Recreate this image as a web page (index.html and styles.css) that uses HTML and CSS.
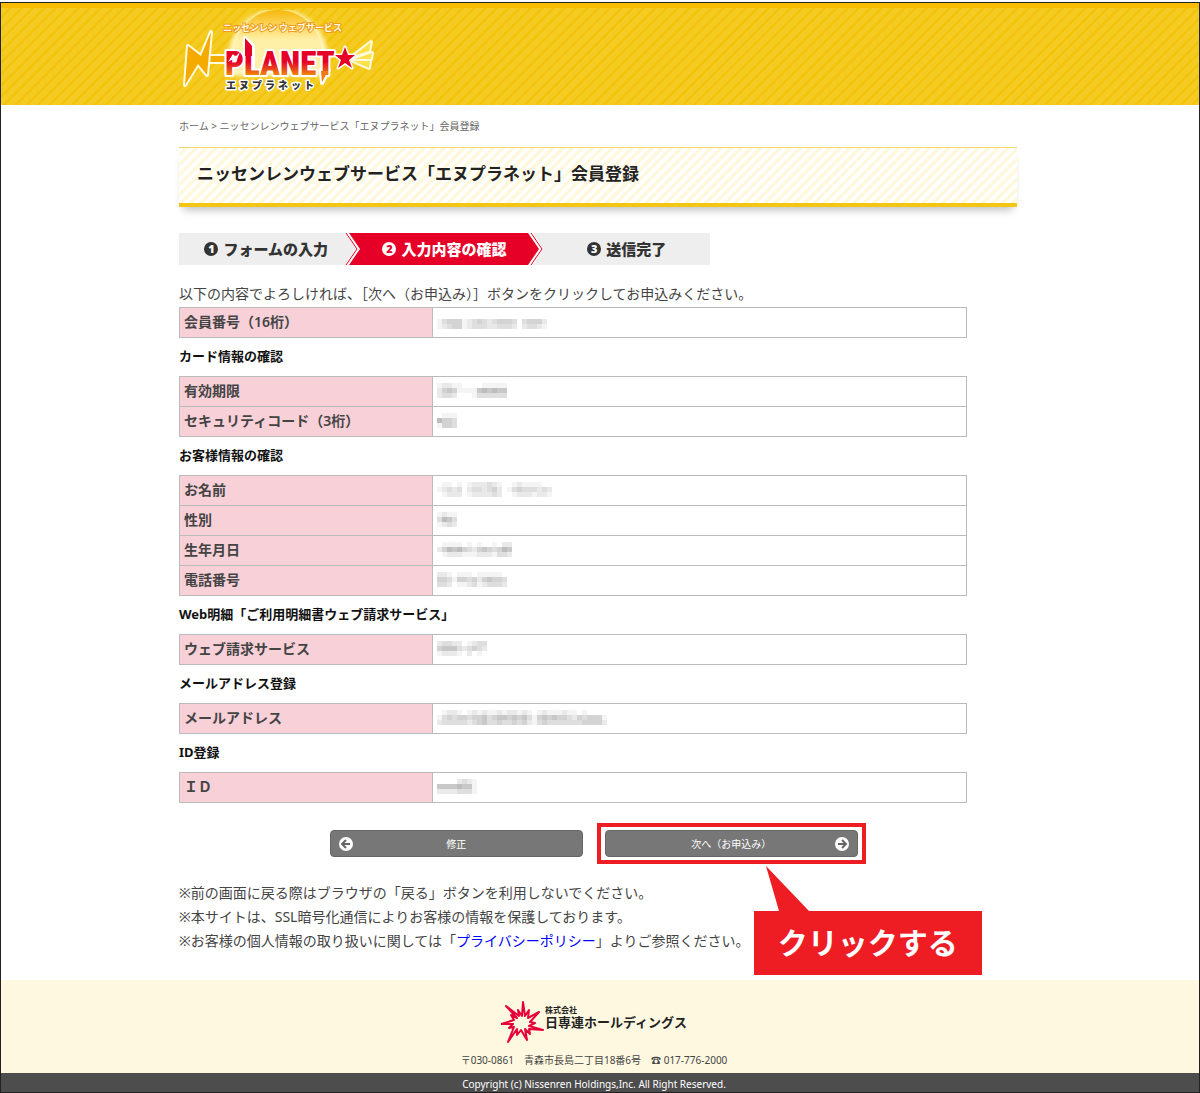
FILE: index.html
```html
<!DOCTYPE html>
<html lang="ja">
  <head>
    <meta charset="utf-8">
    <title>ニッセンレンウェブサービス「エヌプラネット」会員登録</title>
    <link rel="stylesheet" href="styles.css">
  </head>
  <body>
    <div class="page">
      <header class="header">
        <div class="container">
          <a class="logo" href="#" aria-label="エヌプラネット">
            <svg width="200" height="84" viewBox="0 0 200 84">
              <defs>
                <linearGradient id="red" x1="0" y1="0" x2="0" y2="1">
                  <stop offset="0.45" stop-color="#e60027"/>
                  <stop offset="0.65" stop-color="#ea4a18"/>
                  <stop offset="0.85" stop-color="#f5a000"/>
                </linearGradient>
                <linearGradient id="sun" x1="0" y1="0" x2="0" y2="1">
                  <stop offset="0" stop-color="#f7b90c"/>
                  <stop offset="0.5" stop-color="#fff0a8"/>
                </linearGradient>
                <filter id="glow" x="-30%" y="-30%" width="160%" height="160%">
                  <feGaussianBlur stdDeviation="2"/>
                </filter>
              </defs>
              <path d="M52 66A50 50 0 1 1 146 66Z" fill="#fff6c0" filter="url(#glow)"/>
              <path d="M58 60A44 44 0 1 1 140 60Z" fill="url(#sun)"/>
              <text class="logo-top" x="44" y="21">ニッセンレン ウェブサービス</text>
              <g stroke="#fffbe0" stroke-width="4" stroke-linejoin="round" fill="#f5aa00" paint-order="stroke">
                <path d="M27 46H46V52H27Z"/>
                <path d="M32 22 28 65 19 54 6 75 9 36 22 46Z"/>
                <g fill="#ffe14a">
                  <path d="M174 46 192 32 190 41Z"/>
                  <path d="M176 49 193 43 192 49Z"/>
                  <path d="M174 51 191 51 190 58Z"/>
                </g>
              </g>
              <path d="M66 28 74 36V62H66ZM142 60H150L143 73Z" fill="#fff" stroke="#fff" stroke-width="4" stroke-linejoin="round"/>
              <text class="logo-name" x="46" y="65">PLANET</text>
              <path d="M66 28 73 36V46H66Z" fill="#e60027"/>
              <path d="M142 61H149L143 72Z" fill="#f07818"/>
              <path d="M49 52 54 44 56 47 61 42 57 52 54 49Z" fill="#fff"/>
              <path d="M166 37 169 45 176 45 170 50 173 58 166 53 159 58 162 50 156 45 163 45Z" fill="#e60027" stroke="#fff" stroke-width="3" paint-order="stroke" stroke-linejoin="round"/>
              <text class="logo-kana" x="47 60 73 86 99 112 125" y="79">エヌプラネット</text>
            </svg>
          </a>
        </div>
      </header>

      <main class="container">
        <nav class="breadcrumb"><a href="#">ホーム</a> &gt; ニッセンレンウェブサービス「エヌプラネット」会員登録</nav>
        <h1 class="title">ニッセンレンウェブサービス「エヌプラネット」会員登録</h1>

        <ol class="steps">
          <li><span class="num">1</span>フォームの入力</li>
          <li class="arrow" aria-hidden="true">
            <svg width="16" height="32" viewBox="0 0 16 32">
              <path d="M0 0H5L16 16 5 32H0L11 16Z" fill="#fff"/>
              <path d="M4 0H16V32H4L15 16Z" fill="#e60027"/>
              <path d="M1 0 12 16 1 32" fill="none" stroke="#e60027"/>
            </svg>
          </li>
          <li class="current"><span class="num">2</span>入力内容の確認</li>
          <li class="arrow" aria-hidden="true">
            <svg width="16" height="32" viewBox="0 0 16 32">
              <path d="M0 0H5L15 16 5 32H0Z" fill="#fff"/>
              <path d="M0 0 11 16 0 32Z" fill="#e60027"/>
              <path d="M3 0 14 16 3 32" fill="none" stroke="#e60027"/>
            </svg>
          </li>
          <li><span class="num">3</span>送信完了</li>
        </ol>

        <p class="lead">以下の内容でよろしければ、［次へ（お申込み）］ボタンをクリックしてお申込みください。</p>

        <table class="confirm">
          <tr><th>会員番号（16桁）</th><td><svg class="mosaic" data-rows="0000000000000000000000,1344412343234443034442,1234412333223332023321"></svg></td></tr>
        </table>

        <h2>カード情報の確認</h2>
        <table class="confirm">
          <tr><th>有効期限</th><td><svg class="mosaic" data-rows="122110000111110,245411115656550,233200013333330"></svg></td></tr>
          <tr><th>セキュリティコード（3桁）</th><td><svg class="mosaic" data-rows="01110,64430,14430"></svg></td></tr>
        </table>

        <h2>お客様情報の確認</h2>
        <table class="confirm">
          <tr><th>お名前</th><td><svg class="mosaic" data-rows="011010122232100121111000,123230233234201343332320,012220122223200122212210"></svg></td></tr>
          <tr><th>性別</th><td><svg class="mosaic" data-rows="1211,3653,1232"></svg></td></tr>
          <tr><th>生年月日</th><td><svg class="mosaic" data-rows="0111101010010220,2465643245434650,0122211122213320"></svg></td></tr>
          <tr><th>電話番号</th><td><svg class="mosaic" data-rows="22101110111110,44314434245443,33201123123332"></svg></td></tr>
        </table>

        <h2>Web明細「ご利用明細書ウェブ請求サービス」</h2>
        <table class="confirm">
          <tr><th>ウェブ請求サービス</th><td><svg class="mosaic" data-rows="2332201233,4555323432,1222102010"></svg></td></tr>
        </table>

        <h2>メールアドレス登録</h2>
        <table class="confirm">
          <tr><th>メールアドレス</th><td><svg class="mosaic" data-rows="0122101212112122121012111211010000,1343443445345545453145454432434441,2333332345334334342134333333344442"></svg></td></tr>
        </table>

        <h2>ID登録</h2>
        <table class="confirm">
          <tr><th>ＩＤ</th><td><svg class="mosaic" data-rows="00002321,55556551,22223331"></svg></td></tr>
        </table>

        <div class="buttons">
          <button type="button" class="btn">
            <svg class="icon" width="14" height="14" viewBox="0 0 14 14"><circle cx="7" cy="7" r="7" fill="#fff"/><path d="M11 7H4M7 3 3 7 7 11" fill="none" stroke="#666" stroke-width="2"/></svg>
            <span>修正</span>
          </button>
          <div class="highlight">
            <button type="button" class="btn">
              <span>次へ（お申込み）</span>
              <svg class="icon" width="14" height="14" viewBox="0 0 14 14"><circle cx="7" cy="7" r="7" fill="#fff"/><path d="M3 7H10M7 3 11 7 7 11" fill="none" stroke="#666" stroke-width="2"/></svg>
            </button>
            <div class="callout">
              <svg width="44" height="45" viewBox="0 0 44 45"><path d="M0 0 13 45H43Z" fill="#ee1c23"/></svg>
              <p>クリックする</p>
            </div>
          </div>
        </div>

        <div class="notes">
          <p>※前の画面に戻る際はブラウザの「戻る」ボタンを利用しないでください。</p>
          <p>※本サイトは、SSL暗号化通信によりお客様の情報を保護しております。</p>
          <p>※お客様の個人情報の取り扱いに関しては「<a href="#">プライバシーポリシー</a>」よりご参照ください。</p>
        </div>
      </main>

      <footer class="footer">
        <div class="company">
          <svg width="44" height="42" viewBox="0 0 44 42">
            <path d="M22 1 24 15 28 9 27 17 38 11 29 21 34 22 28 25 42 29 28 28 29 33 24 28 26 39 20 29 16 34 16 28 7 41 13 26 8 27 12 23 0 23 13 19 10 14 16 17 5 5 18 15 17 9 21 15Z" fill="none" stroke="#e60039" stroke-width="2" stroke-linejoin="round"/>
          </svg>
          <div class="company-name"><small>株式会社</small>日専連ホールディングス</div>
        </div>
        <p class="address">〒030-0861　青森市長島二丁目18番6号　☎ 017-776-2000</p>
        <p class="copyright">Copyright (c) Nissenren Holdings,Inc. All Right Reserved.</p>
      </footer>
    </div>
    <script src="script.js"></script>
  </body>
</html>
```

FILE: styles.css
```css
* {
  box-sizing: border-box;
}

body {
  margin: 0;
  padding: 2px 0 1px;
  color: #444;
  font-family: "Noto Sans", "Noto Sans CJK JP", sans-serif;
  font-size: 14px;
  line-height: 24px;
}

p,
h1,
h2,
ol {
  margin: 0;
  padding: 0;
}

.page {
  border: 1px solid #222;
}

.container {
  max-width: 842px;
  margin: 0 auto;
  padding-right: 4px;
}

.header {
  height: 102px;
  padding-top: 2px;
  border-top: 5px solid #f9bd00;
  background: repeating-linear-gradient(135deg, #f3cb22 0, #f3cb22 5px, #f4c30c 6px, #f4c30c 8px);
}

.logo svg {
  display: block;
}

.logo-top {
  font: bold 9px "Noto Sans CJK JP", sans-serif;
  fill: #fffbe0;
  stroke: #f09a20;
  stroke-width: 2px;
  paint-order: stroke;
}

.logo-name {
  font: 900 33px "Roboto Condensed", "Liberation Sans Narrow", sans-serif;
  fill: url(#red);
  stroke: #fff;
  stroke-width: 4px;
  stroke-linejoin: round;
  paint-order: stroke;
}

.logo-kana {
  font: 900 10px "Noto Sans CJK JP", sans-serif;
  fill: #333;
  stroke: #fff;
  stroke-width: 3px;
  stroke-linejoin: round;
  paint-order: stroke;
}

.breadcrumb {
  padding: 9px 0;
  color: #666;
  font-size: 10px;
}

.breadcrumb a {
  color: #666;
  text-decoration: none;
}

.title {
  padding: 14px 18px 17px;
  border-top: 1px solid #eed96c;
  border-bottom: 4px solid #f3c613;
  background: repeating-linear-gradient(135deg, #fff 0, #fff 3px, #fff8dc 4px, #fff8dc 7px);
  box-shadow: 0 7px 8px -4px rgba(0, 0, 0, 0.25);
  color: #222;
  font-size: 17px;
}

/* progress steps */
.steps {
  display: flex;
  width: 531px;
  max-width: 100%;
  margin: 26px 0 17px;
  background: #eee;
  list-style: none;
  color: #333;
  font-size: 15px;
  font-weight: 900;
  line-height: 32px;
}

.steps li {
  display: flex;
  flex: 1 1 160px;
  align-items: center;
  justify-content: center;
  gap: 5px;
}

.steps li:first-child {
  padding-left: 8px;
}

.steps .arrow {
  flex: none;
}

.steps .current {
  background: #e60027;
  color: #fff;
}

.num {
  width: 14px;
  height: 14px;
  border-radius: 50%;
  background: #333;
  color: #fff;
  font-size: 11px;
  line-height: 14px;
  text-align: center;
}

.current .num {
  background: #fff;
  color: #e60027;
}

.lead {
  padding-bottom: 1px;
}

/* confirmation tables */
.confirm {
  width: 94%;
  border-collapse: collapse;
  table-layout: fixed;
}

.confirm th,
.confirm td {
  height: 30px;
  padding: 0 4px 2px;
  border: 1px solid #bbb;
  text-align: left;
}

.confirm th {
  width: 253px;
  background: #f8d0d8;
  line-height: 20px;
  font-weight: 600;
}

.mosaic {
  display: block;
}

h2 {
  padding: 6px 0 8px;
  color: #111;
  font-size: 13px;
}

.buttons {
  display: flex;
  align-items: center;
  gap: 14px;
  margin: 20px 0 17px;
  padding-left: 18%;
}

.btn {
  display: flex;
  align-items: center;
  width: 253px;
  height: 27px;
  padding: 0 8px;
  border: 1px solid #666;
  border-radius: 4px;
  background: #777;
  color: #fff;
  font-family: inherit;
  font-size: 10px;
}

.btn span {
  flex: 1;
}

/* keep the label centred beside the icon */
.btn span:first-child {
  padding-left: 14px;
}

.btn span:last-child {
  padding-right: 14px;
}

.highlight {
  position: relative;
  padding: 3px 4px;
  border: 4px solid #ee1c23;
}

.callout {
  position: absolute;
  top: 39px;
  left: 153px;
}

.callout svg {
  display: block;
  margin-left: 12px;
}

.callout p {
  padding: 10px 24px;
  background: #ee1c23;
  color: #fff;
  font-size: 30px;
  font-weight: bold;
  line-height: 44px;
  white-space: nowrap;
}

.notes a {
  color: #00f;
  text-decoration: none;
}

.footer {
  margin-top: 27px;
  background: #fff8e0;
  font-size: 10px;
  text-align: center;
}

.company {
  display: flex;
  justify-content: center;
  padding: 21px 12px 0 0;
}

.company-name {
  padding-top: 5px;
  color: #222;
  font-size: 13px;
  font-weight: bold;
  line-height: 16px;
  text-align: left;
}

.company-name small {
  display: block;
  font-size: 8px;
  line-height: 8px;
}

.address {
  padding: 5px 12px 1px 0;
}

.copyright {
  padding: 3px 12px 0 0;
  background: #4d4d4d;
  color: #fff;
  line-height: 16px;
}
```

FILE: script.js
```js
// draws the masked values: one 5px square per digit, higher is darker
document.querySelectorAll(".mosaic").forEach(function (svg) {
  var rows = svg.dataset.rows.split(",");
  var size = 5;
  svg.setAttribute("width", rows[0].length * size);
  svg.setAttribute("height", rows.length * size);
  rows.forEach(function (row, y) {
    row.split("").forEach(function (level, x) {
      var rect = document.createElementNS("http://www.w3.org/2000/svg", "rect");
      var shade = 255 - level * 11;
      rect.setAttribute("x", x * size);
      rect.setAttribute("y", y * size);
      rect.setAttribute("width", size);
      rect.setAttribute("height", size);
      rect.setAttribute("fill", "rgb(" + shade + "," + shade + "," + shade + ")");
      svg.appendChild(rect);
    });
  });
});
```
